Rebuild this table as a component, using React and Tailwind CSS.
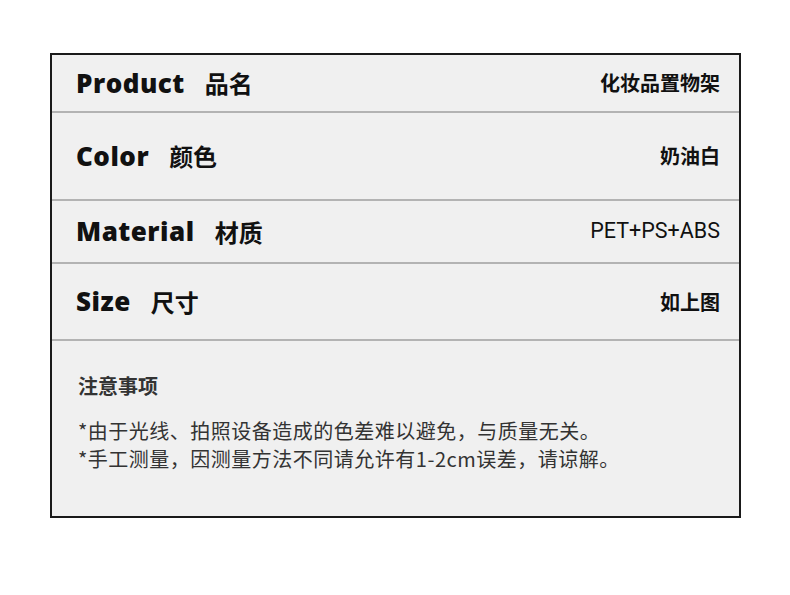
import React from "react";

const rows = [
  { en: "Product", zh: "品名", val: "化妆品置物架", h: "h-[56px]" },
  { en: "Color", zh: "颜色", val: "奶油白", h: "h-[86px]" },
  { en: "Material", zh: "材质", val: "PET+PS+ABS", h: "h-[61px]", latin: true },
  { en: "Size", zh: "尺寸", val: "如上图", h: "h-[75px]" },
];

export default function App() {
  return (
    <div className="w-[790px] h-[595px] bg-white pt-[53px] pl-[50px]" style={{ fontFamily: '"Noto Sans CJK SC", sans-serif' }}>
      <div className="w-[691px] h-[465px] border-2 border-[#1a1a1a] bg-[#f0f0f0] flex flex-col">
        {rows.map((r) => (
          <React.Fragment key={r.en}>
            <div className={`${r.h} flex items-center justify-between pl-[24px] pr-[19px]`}>
              <div className="flex items-center text-[#111]">
                <span className="text-[26px] font-extrabold tracking-[0.5px]" style={{ fontFamily: '"Open Sans", "Noto Sans CJK SC", sans-serif' }}>{r.en}</span>
                <span className="ml-[20px] text-[24px] font-bold">{r.zh}</span>
              </div>
              <span
                className={r.latin ? "text-[21.5px] text-[#111]" : "text-[20px] font-bold text-[#111]"}
                style={r.latin ? { fontFamily: 'Roboto, "Noto Sans CJK SC", sans-serif' } : undefined}
              >
                {r.val}
              </span>
            </div>
            <div className="h-[2px] bg-[#b3b3b3]" />
          </React.Fragment>
        ))}
        <div className="flex-1 pl-[26px] pt-[31px]">
          <div className="text-[20px] font-bold text-[#333] leading-[28px]">注意事项</div>
          <div className="mt-[17px] text-[20px] text-[#333] leading-[28px] tracking-[0.5px]">
            <div>*由于光线、拍照设备造成的色差难以避免，与质量无关。</div>
            <div>*手工测量，因测量方法不同请允许有1-2cm误差，请谅解。</div>
          </div>
        </div>
      </div>
    </div>
  );
}
